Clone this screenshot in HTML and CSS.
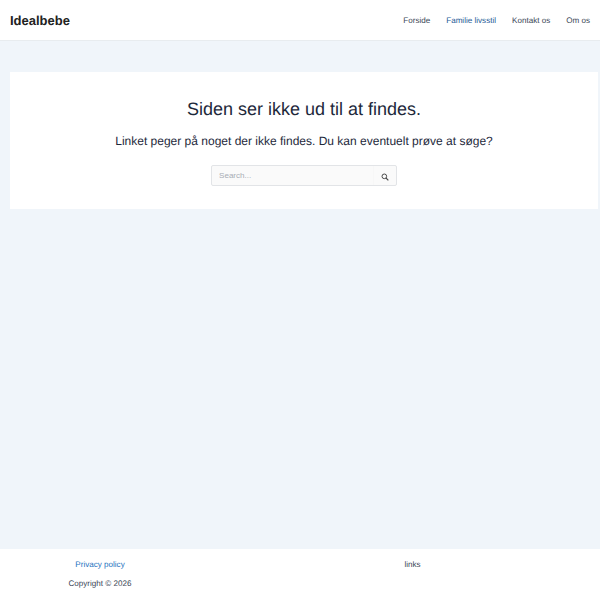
FILE: index.html
```html
<!DOCTYPE html>
<html lang="da">
  <head>
    <meta charset="utf-8">
    <title>Idealbebe</title>
    <link rel="stylesheet" href="styles.css">
  </head>
  <body>
    <header class="site-header">
      <a class="site-title" href="#">Idealbebe</a>
      <nav class="main-nav">
        <a href="#">Forside</a>
        <a class="current" href="#">Familie livsstil</a>
        <a href="#">Kontakt os</a>
        <a href="#">Om os</a>
      </nav>
    </header>
    <main class="content">
      <section class="card">
        <h1>Siden ser ikke ud til at findes.</h1>
        <p>Linket peger på noget der ikke findes. Du kan eventuelt prøve at søge?</p>
        <form class="search">
          <input type="search" placeholder="Search...">
          <button type="button" class="search-btn">
            <svg viewBox="0 0 24 24" width="8" height="8">
              <circle cx="10" cy="10" r="7" fill="none" stroke="#4a4a4a" stroke-width="3"></circle>
              <line x1="15" y1="15" x2="22" y2="22" stroke="#4a4a4a" stroke-width="3.4"></line>
            </svg>
          </button>
        </form>
      </section>
    </main>
    <footer class="site-footer">
      <div class="footer-col left">
        <a href="#">Privacy policy</a>
        <span class="copy">Copyright © 2026</span>
      </div>
      <div class="footer-col right">
        <span class="links">links</span>
      </div>
    </footer>
  </body>
</html>
```

FILE: styles.css
```css
* {
  box-sizing: border-box;
}
html, body {
  height: 100%;
}
body {
  margin: 0;
  display: flex;
  flex-direction: column;
  background-color: #f0f5fa;
  color: #3a4656;
  font-family: "Liberation Sans", Arial, sans-serif;
  text-rendering: geometricPrecision;
}
a {
  text-decoration: none;
}
.site-header {
  display: flex;
  align-items: center;
  justify-content: space-between;
  height: 41px;
  padding: 0 10px;
  background-color: #fff;
  border-bottom: 1px solid #e8ecef;
}
.site-title {
  font-size: 13px;
  font-weight: 700;
  color: #222;
}
.main-nav {
  display: flex;
  gap: 16px;
}
.main-nav a {
  font-size: 8.08px;
  color: #3a4656;
}
.main-nav a.current {
  color: #1e5a96;
}
.content {
  flex: 1;
  padding: 31px 2px 0 10px;
}
.card {
  display: flex;
  flex-direction: column;
  align-items: center;
  height: 137px;
  padding-top: 26px;
  background-color: #fff;
}
.card h1 {
  margin: 0;
  font-size: 18px;
  font-weight: 400;
  line-height: 22px;
  color: #1e293b;
}
.card p {
  margin: 12px 0 0;
  font-size: 12px;
  line-height: 18px;
  color: #1e293b;
}
.search {
  display: flex;
  width: 186px;
  height: 21px;
  margin-top: 15px;
  background-color: #fafafa;
  border: 1px solid #e2e4e7;
  border-radius: 2px;
}
.search input {
  flex: 1;
  min-width: 0;
  padding: 0 7px;
  font-family: inherit;
  font-size: 8.08px;
  background: none;
  border: 0;
}
.search input::placeholder {
  color: #a8adb5;
}
.search-btn {
  display: flex;
  justify-content: center;
  align-items: center;
  width: 23px;
  padding: 2px 0 0;
  background: none;
  border: 0;
  border-left: 1px solid #f7f7f7;
}
.site-footer {
  display: flex;
  height: 51px;
  background-color: #fff;
  font-size: 8.08px;
}
.footer-col {
  display: flex;
  flex-direction: column;
  align-items: center;
  gap: 10px;
  padding-top: 11px;
}
.footer-col.left {
  width: 200px;
}
.footer-col.right {
  flex: 1;
  padding-left: 25px;
}
.footer-col a {
  color: #1e73be;
}
.links {
  color: #3a4656;
}
```
